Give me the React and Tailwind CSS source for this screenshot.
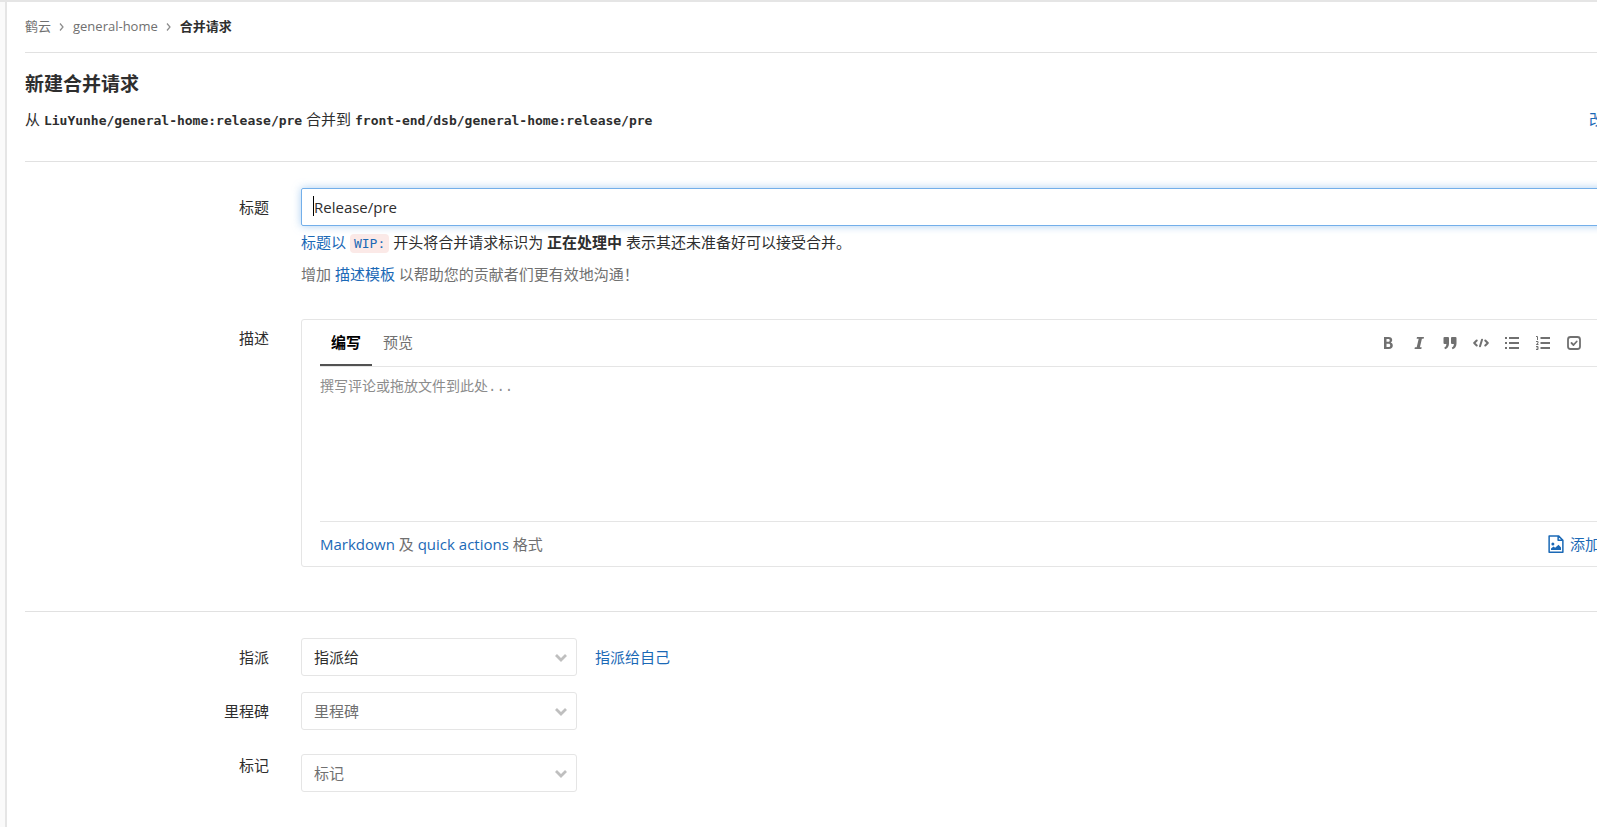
import React, { useState } from 'react';

const Icon = ({ children, className = 'size-4' }) => (
  <svg viewBox="0 0 16 16" fill="currentColor" className={className} aria-hidden="true">
    {children}
  </svg>
);

const TOOLS = [
  {
    label: '粗体',
    icon: (
      <path
        fillRule="evenodd"
        d="M4 2h4.6c2.3 0 3.6 1.2 3.6 3.1 0 1.2-.6 2-1.5 2.5 1.3.4 2.1 1.5 2.1 3 0 2.1-1.5 3.4-3.9 3.4H4V2zm2.5 2v2.8h1.8c.9 0 1.4-.5 1.4-1.4S9.2 4 8.3 4H6.5zm0 4.700V12h2.100c1 0 1.600-.6 1.600-1.600 0-1.100-.6-1.700-1.600-1.700H6.500z"
      />
    ),
  },
  {
    label: '斜体',
    icon: <path d="M6 2h7l-.4 1.800h-1.700L8.900 12.200h1.800l-.4 1.800H3.500l.4-1.800h1.800l2-8.400H5.600L6 2z" />,
  },
  {
    label: '引用',
    icon: (
      <path d="M2.500 2H6a1 1 0 0 1 1 1v5.500C7 11.500 5.500 13.500 3 14.200L2.300 12.500C3.700 11.900 4.300 10.800 4.400 9H2.500a1 1 0 0 1-1-1V3a1 1 0 0 1 1-1zM10 2h3.500a1 1 0 0 1 1 1v5.500c0 3-1.500 5-4 5.700l-.7-1.700c1.400-.6 2-1.700 2.100-3.500H10a1 1 0 0 1-1-1V3a1 1 0 0 1 1-1z" />
    ),
  },
  {
    label: '代码',
    icon: (
      <g fill="none" stroke="currentColor" strokeWidth="2" strokeLinecap="round" strokeLinejoin="round">
        <path d="M3.700 5.500 1.200 8l2.500 2.500M12.300 5.500 14.800 8l-2.500 2.500M9 4.800l-2 6.400" />
      </g>
    ),
  },
  {
    label: '无序列表',
    icon: (
      <path d="M1 2h2v2H1V2zm4 0h10v2H5V2zM1 7h2v2H1V7zm4 0h10v2H5V7zm-4 5h2v2H1v-2zm4 0h10v2H5v-2z" />
    ),
  },
  {
    label: '有序列表',
    icon: (
      <>
        <path d="M5.500 2H15v2H5.500V2zm0 5H15v2H5.500V7zm0 5H15v2H5.500v-2z" />
        <path
          fill="none"
          stroke="currentColor"
          d="M1 1.500h1.500V5M1 6.500h2v1.700L1.300 9.500H3.500M1 11.500h2v3H1M1.500 13H3"
        />
      </>
    ),
  },
  {
    label: '任务列表',
    icon: (
      <g fill="none" stroke="currentColor" strokeWidth="1.800" strokeLinecap="round" strokeLinejoin="round">
        <rect x="2" y="2" width="12" height="12" rx="2.500" />
        <path d="m5.500 8 2 2 3.200-3.500" />
      </g>
    ),
  },
];

const Crumb = () => (
  <Icon className="size-2 text-[#8c8c8c]">
    <path fill="none" stroke="currentColor" strokeWidth="2.500" d="m4 1 6 7-6 7" />
  </Icon>
);

const FormRow = ({ label, id, children, className = '' }) => (
  <div className={`flex ${className}`}>
    <label htmlFor={id} className="mr-8 w-61 shrink-0 pt-[7px] text-right leading-6">
      {label}
    </label>
    <div className="min-w-0 flex-1">{children}</div>
  </div>
);

const Dropdown = ({ id, text, muted = true }) => (
  <div className="relative w-69">
    <select
      id={id}
      className={`h-[38px] w-full appearance-none rounded-[3px] border border-[#e5e5e5] bg-white px-3 ${
        muted ? 'text-[#707070]' : 'text-[#2e2e2e]'
      }`}
    >
      <option>{text}</option>
    </select>
    <svg viewBox="0 0 12 8" className="pointer-events-none absolute top-4 right-[10px] h-2 w-3" aria-hidden="true">
      <path d="m1 1 5 5 5-5" fill="none" stroke="#bfbfbf" strokeWidth="2.800" />
    </svg>
  </div>
);

const Ref = ({ children }) => (
  <code className="font-['DejaVu_Sans_Mono',monospace] text-[13px] leading-none font-bold">{children}</code>
);

const App = () => {
  const [title, setTitle] = useState('Release/pre');
  const [description, setDescription] = useState('');

  return (
    <div className="flex min-h-screen overflow-clip border-t-2 border-[#e5e5e5] bg-white font-['Open_Sans','Noto_Sans_CJK_SC',sans-serif] text-[15px] text-[#2e2e2e]">
      <aside className="w-[7px] shrink-0 border-r-2 border-[#e5e5e5] bg-[#fafafa]" />
      <main className="-mr-13 min-w-0 flex-1 pl-[18px]">
        <nav className="flex h-[51px] items-center gap-[7px] border-b border-[#e1e1e1] text-[13px] text-[#707070]">
          <a href="#group">鹤云</a>
          <Crumb />
          <a href="#project">general-home</a>
          <Crumb />
          <a href="#requests" className="font-bold text-[#2e2e2e]">合并请求</a>
        </nav>

        <h1 className="mt-4 text-[19px] leading-[30px] font-bold">新建合并请求</h1>
        <div className="mt-2 flex justify-between border-b border-[#e1e1e1] pb-[30px] leading-6">
          <p>
            从 <Ref>LiuYunhe/general-home:release/pre</Ref> 合并到{' '}
            <Ref>front-end/dsb/general-home:release/pre</Ref>
          </p>
          <a href="#branches" className="text-[#1b69b6]">改变分支</a>
        </div>

        <form onSubmit={(e) => e.preventDefault()}>
          <FormRow label="标题" id="title" className="mt-[26px]">
            <div className="relative">
              <input
                id="title"
                value={title}
                onChange={(e) => setTitle(e.target.value)}
                className="block h-[38px] w-full rounded-[2px] border border-[#73afea] px-3 caret-transparent shadow-[0_0_8px_#73afea99] outline-none"
              />
              <span className="pointer-events-none absolute top-2 left-3 h-5 w-px bg-black" />
            </div>
            <p className="mt-1 leading-6">
              <a href="#wip" className="text-[#1b69b6]">
                标题以{' '}
                <code className="rounded bg-[#fbe9e7] px-1 py-[2px] font-['DejaVu_Sans_Mono',monospace] text-[13px] leading-none">WIP:</code>
              </a>{' '}
              开头将合并请求标识为 <strong>正在处理中</strong> 表示其还未准备好可以接受合并。
            </p>
            <p className="mt-2 leading-6 text-[#707070]">
              增加 <a href="#templates" className="text-[#1b69b6]">描述模板</a> 以帮助您的贡献者们更有效地沟通！
            </p>
          </FormRow>

          <FormRow label="描述" id="description" className="mt-[33px]">
            <div className="rounded-[3px] border border-[#e5e5e5] px-[18px]">
              <div className="flex h-[47px] justify-between border-b border-[#e5e5e5]">
                <div className="flex">
                  <button type="button" className="border-b-2 border-[#525252] px-[11px] font-bold text-black">编写</button>
                  <button type="button" className="border-b-2 border-transparent px-[11px] text-[#707070]">预览</button>
                </div>
                <div className="mr-12 flex items-center gap-[15px] text-[#707070]">
                  {TOOLS.map((tool) => (
                    <button key={tool.label} type="button" aria-label={tool.label}>
                      <Icon>{tool.icon}</Icon>
                    </button>
                  ))}
                </div>
              </div>
              <textarea
                id="description"
                value={description}
                onChange={(e) => setDescription(e.target.value)}
                placeholder="撰写评论或拖放文件到此处..."
                className="block h-[154px] w-full resize-none py-2 font-['Liberation_Mono','Noto_Sans_CJK_SC',monospace] text-[14px] leading-6 outline-none placeholder:text-[#8c8c8c]"
              />
              <div className="flex h-[45px] items-center justify-between border-t border-[#e5e5e5] text-[#707070]">
                <p>
                  <a href="#markdown" className="text-[#1b69b6]">Markdown</a> 及{' '}
                  <a href="#actions" className="text-[#1b69b6]">quick actions</a> 格式
                </p>
                <button type="button" className="flex items-center gap-1 text-[#1b69b6]">
                  <Icon className="size-5">
                    <path
                      fill="none"
                      stroke="currentColor"
                      strokeWidth="1.200"
                      strokeLinejoin="round"
                      d="M2.500 1.500h7.500l3.500 3.500v9.500h-11zM9.700 1.500V5h3.800"
                    />
                    <circle cx="5.500" cy="8" r="1.200" />
                    <path d="M4 12.800v-1.300l2-1.500 1.300 1L10 8.500l2 2.300v2z" />
                  </Icon>
                  添加附件
                </button>
              </div>
            </div>
          </FormRow>

          <div className="mt-11 border-t border-[#e1e1e1] pt-[26px]">
            <FormRow label="指派" id="assignee">
              <div className="flex items-center gap-[18px]">
                <Dropdown id="assignee" text="指派给" muted={false} />
                <a href="#me" className="text-[#1b69b6]">指派给自己</a>
              </div>
            </FormRow>
            <FormRow label="里程碑" id="milestone" className="mt-4">
              <Dropdown id="milestone" text="里程碑" />
            </FormRow>
            <FormRow label="标记" id="labels" className="mt-4">
              <div className="pt-2">
                <Dropdown id="labels" text="标记" />
              </div>
            </FormRow>
          </div>
        </form>
      </main>
    </div>
  );
};

export default App;
